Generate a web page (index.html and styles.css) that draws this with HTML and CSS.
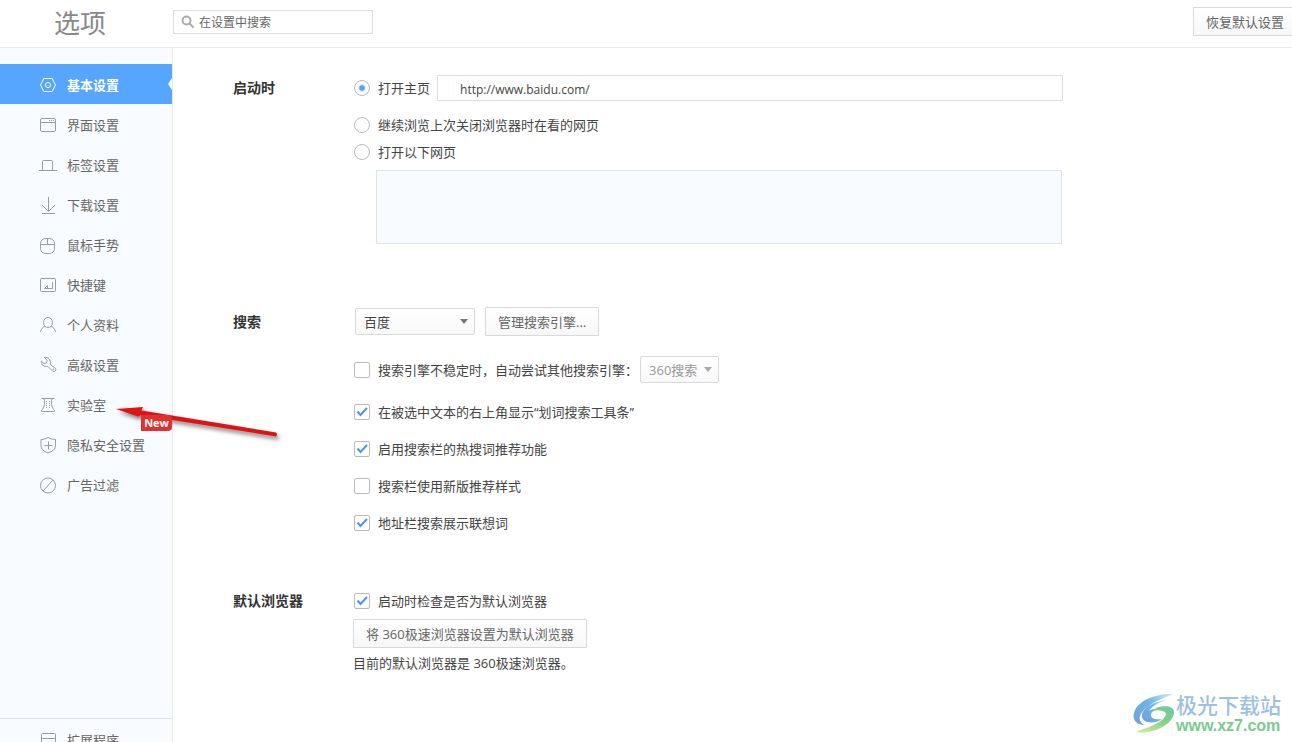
FILE: index.html
```html
<!DOCTYPE html>
<html lang="zh-CN">
<head>
<meta charset="utf-8">
<title>选项</title>
<link rel="stylesheet" href="styles.css">
</head>
<body>
<header class="header">
  <h1 class="title">选项</h1>
  <div class="search">
    <svg class="search-icon" width="14" height="14" viewBox="0 0 14 14"><circle cx="5.5" cy="5.5" r="4" /><path d="M8.5 8.5l4 4" /></svg>
    <input class="search-input" type="text" placeholder="在设置中搜索" aria-label="在设置中搜索">
  </div>
  <button class="button reset" type="button">恢复默认设置</button>
</header>
<div class="layout">
  <aside class="sidebar">
    <nav class="nav">
      <a class="nav-item active" href="#"><svg class="icon" viewBox="0 0 18 18"><path d="M4.8 2.5h8.4L16.500 9l-3.300 6.500H4.800L1.500 9z"/><circle cx="9" cy="9" r="2.500"/></svg>基本设置</a>
      <a class="nav-item" href="#"><svg class="icon" viewBox="0 0 18 18"><rect x="1.500" y="2.500" width="15" height="13" rx="1.500"/><path d="M1.500 6.500h15M10 4.500h1M12 4.500h1M14 4.500h1"/></svg>界面设置</a>
      <a class="nav-item" href="#"><svg class="icon" viewBox="0 0 18 18"><path d="M0 14.500h18M3.500 14.500v-9q0-1 1-1h8q1 0 1 1v9"/></svg>标签设置</a>
      <a class="nav-item" href="#"><svg class="icon" viewBox="0 0 18 18"><path d="M9.500 1v14M3 9l6.500 6.500L16 9M3 17.500h13"/></svg>下载设置</a>
      <a class="nav-item" href="#"><svg class="icon" viewBox="0 0 18 18"><rect x="1.500" y="2.500" width="14" height="15" rx="5"/><path d="M1.500 8.500h14M8.500 2.500v6"/></svg>鼠标手势</a>
      <a class="nav-item" href="#"><svg class="icon" viewBox="0 0 18 18"><rect x="1.500" y="2.500" width="15" height="13" rx="1"/><path d="M13.500 6v6.500H5.500L8.500 9.500v3"/></svg>快捷键</a>
      <a class="nav-item" href="#"><svg class="icon" viewBox="0 0 18 18"><ellipse cx="9" cy="6.500" rx="4.500" ry="5"/><path d="M6 10.500c-2.500.8-4 2.500-4.500 5.500M12 10.500c2.500.8 4 2.500 4.500 5.500"/></svg>个人资料</a>
      <a class="nav-item" href="#"><svg class="icon" viewBox="0 0 18 18"><path d="M5.500 1.500L8 4.300 7.500 7 5 7.500 2.300 5C1.800 8.500 5 11.500 8.800 10.300L13.500 15q1.500 1.200 2.800 0 1.200-1.300 0-2.700L11.300 8.500C12.300 4 9 .8 5.500 1.500z"/><circle cx="14.300" cy="13.300" r=".4"/></svg>高级设置</a>
      <a class="nav-item" href="#"><svg class="icon" viewBox="0 0 18 18"><path d="M2.500 2.500h13M4 2.500q1.500 0 1.500 2v4q0 1-1.500 4l-1.500 2q-.5 1 .5 1h12q1 0 .5-1l-1.500-2q-1.500-3-1.500-4v-4q0-2 1.500-2"/><path stroke-dasharray="1 1" d="M7.500 5v8M10.500 5v8"/></svg>实验室</a>
      <a class="nav-item" href="#"><svg class="icon" viewBox="0 0 18 18"><path d="M9 1.500q3 2 7.500 2v6q0 5-7.500 7.500-7-2.500-7-7.500v-6q4 0 7-2zM9.500 5.500v8M5.500 9.500h8"/></svg>隐私安全设置<span class="badge">New</span></a>
      <a class="nav-item" href="#"><svg class="icon" viewBox="0 0 18 18"><circle cx="9" cy="9.500" r="7.500"/><path d="M4 15L14 4"/></svg>广告过滤</a>
    </nav>
    <div class="nav-extra">
      <a class="nav-item" href="#"><svg class="icon" viewBox="0 0 18 18"><rect x="2.500" y="2.500" width="14" height="13" rx="1"/><path d="M2.500 7.500h14"/></svg>扩展程序</a>
    </div>
  </aside>
  <main class="main">
    <section class="section startup">
      <h2 class="section-title">启动时</h2>
      <div class="fields">
        <div class="row">
          <label class="option"><input class="radio" type="radio" name="start" checked>打开主页</label>
          <input class="url" type="text" value="http://www.baidu.com/" aria-label="主页网址">
        </div>
        <div class="row spaced"><label class="option"><input class="radio" type="radio" name="start">继续浏览上次关闭浏览器时在看的网页</label></div>
        <div class="row tight"><label class="option"><input class="radio" type="radio" name="start">打开以下网页</label></div>
        <textarea class="pages" aria-label="打开以下网页"></textarea>
      </div>
    </section>
    <section class="section engine">
      <h2 class="section-title">搜索</h2>
      <div class="fields">
        <div class="row">
          <select class="select" aria-label="搜索引擎"><option>百度</option></select>
          <button class="button" type="button">管理搜索引擎...</button>
        </div>
        <div class="row fallback">
          <label class="option"><input class="check" type="checkbox">搜索引擎不稳定时，自动尝试其他搜索引擎：</label>
          <select class="select small" aria-label="其他搜索引擎" disabled><option>360搜索</option></select>
        </div>
        <div class="row first-check"><label class="option"><input class="check" type="checkbox" checked>在被选中文本的右上角显示“划词搜索工具条”</label></div>
        <div class="row spaced"><label class="option"><input class="check" type="checkbox" checked>启用搜索栏的热搜词推荐功能</label></div>
        <div class="row spaced"><label class="option"><input class="check" type="checkbox">搜索栏使用新版推荐样式</label></div>
        <div class="row spaced"><label class="option"><input class="check" type="checkbox" checked>地址栏搜索展示联想词</label></div>
      </div>
    </section>
    <section class="section default-browser">
      <h2 class="section-title">默认浏览器</h2>
      <div class="fields">
        <div class="row"><label class="option"><input class="check" type="checkbox" checked>启动时检查是否为默认浏览器</label></div>
        <button class="button set-default" type="button">将 360极速浏览器设置为默认浏览器</button>
        <p class="note">目前的默认浏览器是 360极速浏览器。</p>
      </div>
    </section>
  </main>
</div>
<svg class="arrow" width="180" height="50" viewBox="0 0 180 50">
  <path d="M6 14L33 12L31.500 15.500L166 37.500Q168 39.500 166 41.500L31 20L28 21.500Z"/>
</svg>
<div class="watermark">
  <svg width="42" height="42" viewBox="0 0 42 42">
    <defs>
      <linearGradient id="blue" x1="0" y1="1" x2="1" y2="0"><stop offset="0" stop-color="#6e9fd8"/><stop offset=".55" stop-color="#6eb5e8"/><stop offset="1" stop-color="#d3ebf9"/></linearGradient>
      <linearGradient id="green" x1="0" y1="1" x2="1" y2="0"><stop offset="0" stop-color="#d9ee9c"/><stop offset=".6" stop-color="#86cf84"/><stop offset="1" stop-color="#6cc8a8"/></linearGradient>
    </defs>
    <path fill="url(#blue)" d="M41 1C22 0 4 8 1 20c-2 7 3 12 10 12-6-4-6-10 1-16C20 9 29 5 41 1z"/>
    <path fill="url(#blue)" d="M35 7C22 8 10 14 9 22c-1 8 12 10 20 4-6 1-11 0-11-4 0-3 3-5 7-5-3-1-7-1-9 1 3-5 10-9 19-11z"/>
    <path fill="url(#green)" d="M23 15c8-3 18-2 18 4C41 31 20 42 2 39c9-3 21-7 28-13 4-4 4-7-1-8-3-1-5-1-9 0z"/>
  </svg>
  <div class="watermark-text"><span class="watermark-name">极光下载站</span><span class="watermark-url">www.xz7.com</span></div>
</div>
</body>
</html>
```
FILE: styles.css
```css
* { box-sizing: border-box; }
body {
  margin: 0;
  height: 100vh;
  display: flex;
  flex-direction: column;
  overflow: hidden;
  position: relative;
  background: #fff;
  color: #444;
  font: 13px/20px "Open Sans", "Noto Sans CJK SC", sans-serif;
}
button, input, select, textarea { font: inherit; color: inherit; margin: 0; }

.header {
  flex: none;
  height: 48px;
  display: flex;
  align-items: center;
  padding-bottom: 4px;
  border-bottom: 1px solid #ebebeb;
}
.title {
  width: 173px;
  margin: 0;
  padding: 2px 0 0 54px;
  font-size: 26px;
  line-height: 36px;
  font-weight: 400;
  color: #888;
}
.search {
  width: 200px;
  height: 24px;
  display: flex;
  align-items: center;
  gap: 4px;
  padding-left: 7px;
  border: 1px solid #ddd;
}
.search-icon { flex: none; fill: none; stroke: #aaa; stroke-width: 2; }
.search-input {
  flex: 1;
  min-width: 0;
  padding: 2px 0 0;
  border: 0;
  outline: 0;
  background: none;
  font-size: 12px;
  line-height: 20px;
}
.search-input::placeholder { color: #666; opacity: 1; }

.button {
  height: 29px;
  padding: 0 12px;
  border: 1px solid #d9d9d9;
  border-radius: 1px;
  background: linear-gradient(#fff, #f7f7f7);
  color: #666;
  white-space: nowrap;
}
.reset { margin-left: auto; padding-right: 8px; border-right: 0; }

.layout { flex: 1; min-height: 0; display: flex; }
.sidebar {
  flex: none;
  width: 173px;
  display: flex;
  flex-direction: column;
  background: #f8fbff;
  border-right: 1px solid #e3eaf1;
}
.nav { flex: 1; padding-top: 16px; }
.nav-item {
  position: relative;
  height: 40px;
  display: flex;
  align-items: center;
  gap: 10px;
  padding: 2px 0 0 39px;
  color: #666;
  text-decoration: none;
}
.icon {
  flex: none;
  width: 18px;
  height: 18px;
  fill: none;
  stroke: #969da5;
}
.active { background: #56a5ff; color: #fff; font-weight: bold; }
.active .icon { stroke: #fff; }
.active::after {
  content: "";
  position: absolute;
  right: 0;
  top: 14px;
  border: 6px solid transparent;
  border-left-width: 0;
  border-right: 4px solid #f8fbff;
}
.badge {
  position: absolute;
  right: 0;
  top: -9px;
  z-index: 2;
  padding: 0 3px;
  background: #e0302f;
  border-radius: 0 4px 4px 0;
  color: #fff;
  font-size: 11px;
  line-height: 16px;
  font-weight: bold;
}
.nav-extra { flex: none; height: 24px; border-top: 1px solid #dde5ec; }

.main { flex: 1; min-width: 0; padding: 27px 60px 0; }
.section { display: grid; grid-template-columns: 120px minmax(0, 710px); }
.section-title { margin: 0; font-size: 14px; line-height: 26px; font-weight: bold; color: #333; }
.engine { margin-top: 63px; }
.engine .section-title { line-height: 29px; }
.default-browser { margin-top: 52px; }
.row { min-height: 26px; display: flex; align-items: center; }
.option { display: flex; align-items: center; gap: 8px; padding-left: 1px; white-space: nowrap; }
.spaced { margin-top: 11px; }
.tight { margin-top: 1px; }
.fallback { margin-top: 20px; }
.first-check { margin-top: 16px; }

.radio, .check {
  appearance: none;
  flex: none;
  width: 16px;
  height: 16px;
  border: 1px solid #bbb;
  background: #fff no-repeat center;
}
.radio { border-radius: 50%; }
.radio:checked { background-image: radial-gradient(circle, #5c9ff5 0 2px, transparent 4px); }
.check { border-radius: 2px; }
.check:checked {
  background-image: url("data:image/svg+xml,%3Csvg xmlns='http://www.w3.org/2000/svg' width='14' height='14'%3E%3Cpath d='M2.500 6.500L5.500 10L12 3' fill='none' stroke='%234a94f0' stroke-width='2'/%3E%3C/svg%3E");
}
.url {
  flex: 1;
  min-width: 0;
  height: 26px;
  margin-left: 7px;
  padding: 2px 22px 0;
  border: 1px solid #ddd;
  font-size: 12px;
}
.pages {
  display: block;
  width: calc(100% - 24px);
  height: 74px;
  margin: 5px 0 0 23px;
  border: 1px solid #dfe3ea;
  background: #f8fbff;
  resize: none;
}
.select {
  appearance: none;
  width: 120px;
  height: 27px;
  margin: 0 10px 0 2px;
  padding: 0 8px;
  border: 1px solid #d9d9d9;
  border-radius: 2px;
  background: url("data:image/svg+xml,%3Csvg xmlns='http://www.w3.org/2000/svg' width='8' height='5'%3E%3Cpath d='M0 0h8L4 5z' fill='%23777'/%3E%3C/svg%3E") no-repeat right 6px center, linear-gradient(#fff, #f8f8f8);
}
.small {
  width: 79px;
  color: #999;
  opacity: 1;
  background-image: url("data:image/svg+xml,%3Csvg xmlns='http://www.w3.org/2000/svg' width='8' height='5'%3E%3Cpath d='M0 0h8L4 5z' fill='%23aaa'/%3E%3C/svg%3E"), linear-gradient(#fff, #f8f8f8);
}
.set-default { display: block; margin-top: 5px; }
.note { margin: 5px 0 0; }

.arrow {
  position: absolute;
  left: 110px;
  top: 395px;
  fill: #e01212;
  filter: drop-shadow(2px 3px 2px rgba(0, 0, 0, .5));
}
.watermark {
  position: absolute;
  right: 11px;
  bottom: 7px;
  display: flex;
  align-items: center;
  gap: 1px;
}
.watermark-text { display: flex; flex-direction: column; }
.watermark-name { color: #9cbfe8; font-size: 21px; line-height: 24px; font-weight: 500; }
.watermark-url { color: #7acb8e; font: bold 16px/18px "Liberation Sans", sans-serif; }
```
